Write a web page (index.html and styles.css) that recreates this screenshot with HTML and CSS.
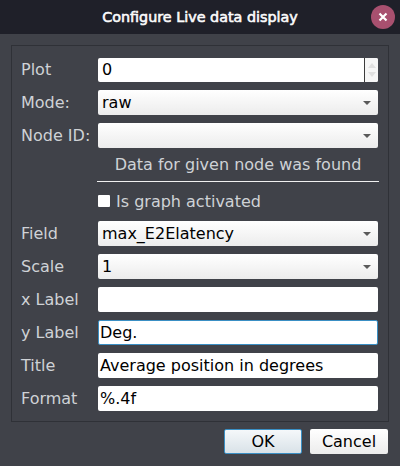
FILE: index.html
```html
<!DOCTYPE html>
<html lang="en">
<head>
<meta charset="utf-8">
<title>Configure Live data display</title>
<link rel="stylesheet" href="styles.css">
</head>
<body>
<div class="dialog">
  <header class="titlebar">
    <h1 class="title">Configure Live data display</h1>
    <button class="close" aria-label="Close">
      <svg width="10" height="10" viewBox="0 0 10 10"><path d="M1.5 1.5L8.5 8.5M8.5 1.5L1.5 8.5" stroke="#fff" stroke-width="2.2" fill="none"/></svg>
    </button>
  </header>
  <main class="content">
    <section class="panel">
      <div class="row row-first">
        <label class="label">Plot</label>
        <div class="spin">
          <span class="spin-value">0</span>
          <span class="spin-btns">
            <svg width="8" height="5" viewBox="0 0 8 5"><path d="M0 5L4 0L8 5Z" fill="#e0e0e0"/></svg>
            <svg width="8" height="5" viewBox="0 0 8 5"><path d="M0 0L4 5L8 0Z" fill="#e0e0e0"/></svg>
          </span>
        </div>
      </div>
      <div class="row">
        <label class="label">Mode:</label>
        <div class="combo"><span>raw</span><i class="arrow"></i></div>
      </div>
      <div class="row">
        <label class="label">Node ID:</label>
        <div class="combo"><span></span><i class="arrow"></i></div>
      </div>
      <div class="row-note">
        <p class="note">Data for given node was found</p>
      </div>
      <div class="row-check">
        <span class="checkbox"></span><span class="check-label">Is graph activated</span>
      </div>
      <div class="row">
        <label class="label">Field</label>
        <div class="combo"><span>max_E2Elatency</span><i class="arrow"></i></div>
      </div>
      <div class="row">
        <label class="label">Scale</label>
        <div class="combo"><span>1</span><i class="arrow"></i></div>
      </div>
      <div class="row">
        <label class="label">x Label</label>
        <div class="input"></div>
      </div>
      <div class="row">
        <label class="label">y Label</label>
        <div class="input focused">Deg.</div>
      </div>
      <div class="row">
        <label class="label">Title</label>
        <div class="input">Average position in degrees</div>
      </div>
      <div class="row">
        <label class="label">Format</label>
        <div class="input">%.4f</div>
      </div>
    </section>
    <footer class="buttons">
      <button class="btn btn-default">OK</button>
      <button class="btn">Cancel</button>
    </footer>
  </main>
</div>
</body>
</html>
```
FILE: styles.css
```css
* { box-sizing: border-box; }
html, body { margin: 0; padding: 0; }
body {
  width: 400px;
  height: 466px;
  overflow: hidden;
  background: #404249;
  font-family: "DejaVu Sans", sans-serif;
  font-size: 16px;
  color: #cfd2d6;
}
.dialog { display: flex; flex-direction: column; height: 466px; }
.titlebar {
  height: 34px;
  background: #1f2029;
  position: relative;
  display: flex;
  align-items: center;
  justify-content: center;
  flex: none;
}
.title {
  margin: 0;
  font-size: 14.35px;
  font-weight: 400;
  -webkit-text-stroke: 0.6px #fbfbfc;
  color: #fbfbfc;
  line-height: 34px;
}
.close {
  position: absolute;
  right: 5px;
  top: 5px;
  width: 24px;
  height: 24px;
  border: 0;
  padding: 0;
  border-radius: 50%;
  background: #a8506f;
  display: flex;
  align-items: center;
  justify-content: center;
}
.content { padding: 11px 11px 0 11px; }
.panel {
  border: 1px solid #2f3137;
  height: 377px;
  padding: 11px 10px 0 9px;
  display: flex;
  flex-direction: column;
  width: 378px;
}
.row {
  display: grid;
  grid-template-columns: 77px 280px;
  align-items: center;
  height: 25px;
  margin-top: 8px;
  flex: none;
}
.row-first { margin-top: 0; height: 24px; }
.row-first + .row { margin-top: 9px; }
.label { color: #cfd2d6; line-height: 25px; white-space: nowrap; }
.spin, .combo, .input {
  height: 25px;
  border-radius: 2px;
  color: #000;
  display: flex;
  align-items: center;
  line-height: 25px;
}
.spin { height: 24px; background: #fff; justify-content: space-between; }
.spin-value { padding-left: 4px; }
.spin-btns {
  width: 14px;
  height: 24px;
  border-left: 1px solid #3c3c3c;
  background: #f6f6f6;
  border-radius: 0 2px 2px 0;
  display: flex;
  flex-direction: column;
  align-items: center;
  justify-content: center;
  gap: 4px;
}
.combo {
  background: linear-gradient(#ffffff, #ececec);
  padding: 0 7px 0 4px;
  justify-content: space-between;
}
.arrow {
  width: 0;
  height: 0;
  border-left: 4px solid transparent;
  border-right: 4px solid transparent;
  border-top: 4px solid #5a5a5a;
  display: block;
}
.input { background: #fff; padding: 0 2px; }
.focused { border: 1px solid #3a8fc4; padding: 0 1px; }
.row-note {
  width: 282px;
  height: 34px;
  border-bottom: 1px solid #f0f0f0;
  margin-left: 76px;
  flex: none;
}
.note {
  margin: 0;
  text-align: center;
  line-height: 33px;
  color: #cfd2d6;
}
.row-check {
  display: flex;
  align-items: center;
  margin: 7px 0 0 77px;
  height: 24px;
  flex: none;
}
.checkbox {
  width: 12px;
  height: 12px;
  background: #fff;
  border-radius: 1px;
  margin-right: 6px;
  flex: none;
}
.buttons {
  display: flex;
  justify-content: flex-end;
  gap: 8px;
  padding: 7px 1px 0 0;
}
.btn {
  width: 78px;
  height: 25px;
  padding: 0;
  border: 0;
  border-radius: 2px;
  font: inherit;
  color: #000;
  background: linear-gradient(#ffffff, #ececec);
}
.btn-default {
  border: 1px solid #3a8fc4;
  background: linear-gradient(#f5f8fa, #d9e2e8);
}
```
